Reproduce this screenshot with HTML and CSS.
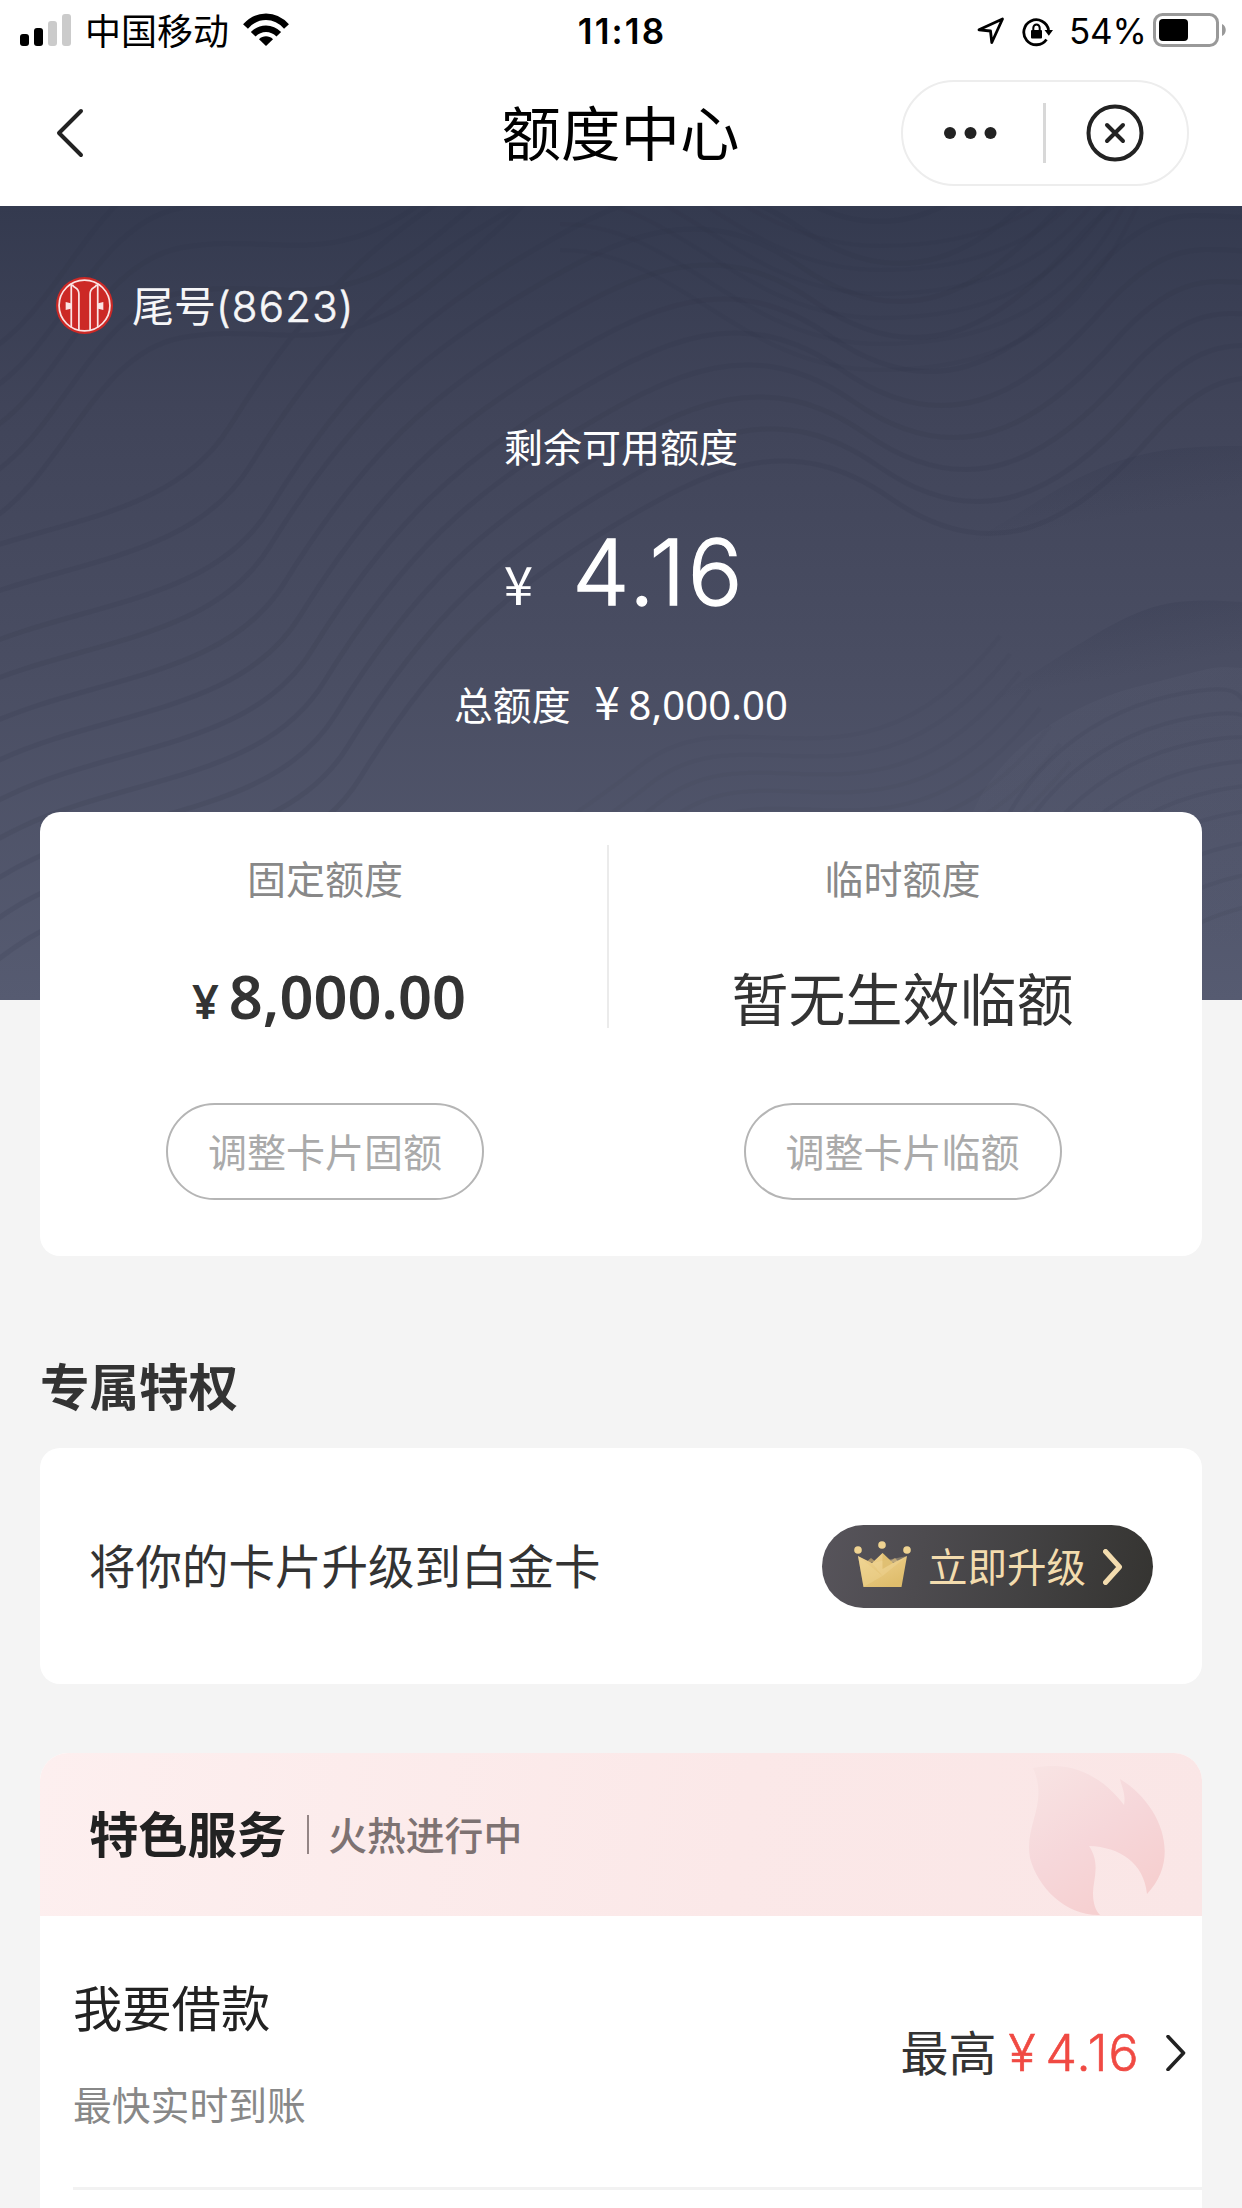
FILE: index.html
```html
<!DOCTYPE html>
<html lang="zh-CN">
<head>
<meta charset="utf-8">
<title>额度中心</title>
<link rel="stylesheet" href="styles.css">
</head>
<body>
<div class="status">
  <div class="status-left">
    <svg class="signal" viewBox="0 0 51 32"><rect y="20" width="9" height="12" rx="3"/><rect x="14" y="14" width="9" height="18" rx="3"/><g fill="#cbcbcb"><rect x="28" y="7" width="9" height="25" rx="3"/><rect x="42" width="9" height="32" rx="3"/></g></svg>
    <span class="carrier">中国移动</span>
    <svg class="wifi" viewBox="0 0 46 33"><g fill="none" stroke="#000" stroke-width="6.5"><path d="M2.5 13.5C14 .5 32 .5 43.500 13.500"/><path d="M10.200 21.300C17.500 13.800 28.500 13.800 35.800 21.300"/></g><path d="M16 26.200C20 22.400 26 22.400 30 26.200L23 33Z"/></svg>
  </div>
  <div class="clock">11:18</div>
  <div class="status-right">
    <svg class="locate" viewBox="0 0 28 28"><path d="M2 12.800 25.500 2 14.800 25.500 13.500 14Z" fill="none" stroke="#000" stroke-width="2.800" stroke-linejoin="round"/></svg>
    <svg class="rotation" viewBox="0 0 32 30"><path d="M26.600 13A12.500 12.500 0 1 0 24.500 22.500" fill="none" stroke="#000" stroke-width="2.800"/><path d="M22.500 13H31L26.800 18.800Z"/><rect x="9" y="13" width="11" height="8.500" rx="1"/><path d="M11.300 14V11A3.200 3.600 0 0 1 17.700 11V14" fill="none" stroke="#000" stroke-width="2"/></svg>
    <span class="percent">54%</span>
    <svg class="battery" viewBox="0 0 74 34"><rect x="1.500" y="1.500" width="63" height="31" rx="8" fill="none" stroke="#999" stroke-width="3"/><rect x="6" y="6" width="29" height="22" rx="4"/><path d="M69 11C74 13 74 21 69 23Z" fill="#999"/></svg>
  </div>
</div>

<header class="nav">
  <svg class="back" viewBox="0 0 28 50"><path d="M25 3 3 25 25 47" fill="none" stroke="#222" stroke-width="4" stroke-linecap="round" stroke-linejoin="round"/></svg>
  <h1 class="nav-title">额度中心</h1>
  <div class="capsule">
    <svg class="dots" viewBox="0 0 54 14"><circle cx="7" cy="7" r="6"/><circle cx="27.500" cy="7" r="6"/><circle cx="47.500" cy="7" r="6"/></svg>
    <i class="capsule-line"></i>
    <svg class="close" viewBox="0 0 58 58"><circle cx="29" cy="29" r="26.500"/><path d="M21 21 37 37M37 21 21 37"/></svg>
  </div>
</header>

<section class="hero">
  <svg class="waves" viewBox="0 0 1242 794" preserveAspectRatio="none">
    <defs>
      <linearGradient id="fold" x1="0" y1="0" x2=".35" y2="1"><stop offset="0" stop-color="#2d3248" stop-opacity=".42"/><stop offset=".5" stop-color="#2d3248" stop-opacity="0"/></linearGradient>
      <linearGradient id="mound" x1="0" y1="0" x2=".2" y2="1"><stop offset="0" stop-color="#676b80" stop-opacity=".15"/><stop offset="1" stop-color="#676b80" stop-opacity="0"/></linearGradient>
      <path id="rise" d="M-20 230C60 190 90 60 180 42S330 70 430 -10S520 -90 560 -130"/>
      <path id="slope" d="M-130 560C-20 420 190 470 270 340S420 150 520 90S700 -10 800 60S980 90 1060 0S1170 -50 1260 -60"/>
      <path id="bowl" d="M560 90C680 90 740 210 880 210S1090 150 1140 40S1200 -50 1260 -60"/>
      <path id="ring" d="M985 680C1000 580 1080 510 1170 490S1230 500 1260 505"/>
      <path id="fan" d="M350 790C430 690 540 640 640 560S860 610 1000 430"/>
    </defs>
    <g class="contour">
      <use href="#rise" y="-80"/><use href="#rise" y="-40"/><use href="#rise"/><use href="#rise" y="45"/><use href="#rise" y="90"/>
      <use href="#slope" x="-40" y="-120"/><use href="#slope" x="-20" y="-80"/><use href="#slope" y="-38"/><use href="#slope"/><use href="#slope" x="15" y="36"/><use href="#slope" x="30" y="70"/><use href="#slope" x="42" y="104"/><use href="#slope" x="54" y="136"/><use href="#slope" x="66" y="168"/><use href="#slope" x="78" y="200"/><use href="#slope" x="90" y="232"/>
    </g>
    <g class="contour fine">
      <use href="#bowl" y="-170"/><use href="#bowl" y="-146"/><use href="#bowl" y="-122"/><use href="#bowl" y="-98"/><use href="#bowl" y="-72"/><use href="#bowl" y="-46"/>
    </g>
    <g class="contour faint">
      <use href="#fan"/><use href="#fan" x="10" y="18"/><use href="#fan" x="20" y="36"/><use href="#fan" x="30" y="54"/><use href="#fan" x="40" y="72"/><use href="#fan" x="50" y="90"/><use href="#fan" x="60" y="108"/><use href="#fan" x="70" y="126"/>
    </g>
    <path fill="url(#fold)" d="M760 370C880 390 950 350 1030 300S1150 240 1242 240V480C1100 440 900 520 760 370Z"/>
    <path fill="url(#fold)" d="M800 640C920 550 980 500 1060 450S1160 390 1242 396V600C1120 560 950 660 800 640Z"/>
    <path fill="url(#mound)" d="M962 650C970 560 1060 500 1140 480S1210 460 1242 462V794H962Z"/>
    <g class="contour fine">
      <use href="#ring"/><use href="#ring" x="10" y="24"/><use href="#ring" x="20" y="48"/><use href="#ring" x="30" y="72"/><use href="#ring" x="40" y="96"/><use href="#ring" x="50" y="120"/><use href="#ring" x="60" y="150"/><use href="#ring" x="70" y="180"/><use href="#ring" x="80" y="210"/>
    </g>
  </svg>
  <div class="bank">
    <svg class="bank-logo" viewBox="0 0 56 56"><circle cx="28" cy="28" r="28" fill="#cc2926"/><g fill="none" stroke="#fbe4e4" stroke-width="1.700"><circle cx="28" cy="28" r="25"/><path d="M15 6.500V49.500M41 6.500V49.500"/><path d="M16 7.500C18 12 22.500 9.500 22.500 17V52M40 7.500C38 12 33.500 9.500 33.500 17V52"/></g><path fill="#fbe4e4" d="M9.500 24.500 15.500 26V31L9.500 32.500ZM46.500 24.500 40.500 26V31L46.500 32.500Z"/></svg>
    <span class="bank-tail">尾号<span class="bank-digits">(8623)</span></span>
  </div>
  <div class="remain-label">剩余可用额度</div>
  <div class="remain"><span class="remain-yen">¥</span><span class="remain-value">4.16</span></div>
  <div class="total"><span>总额度</span><span class="total-yen">¥</span><span class="total-value">8,000.00</span></div>
</section>

<section class="limits">
  <div class="limit">
    <div class="limit-label">固定额度</div>
    <div class="limit-value amount"><span class="amount-yen">¥</span>8,000.00</div>
    <div class="limit-button">调整卡片固额</div>
  </div>
  <i class="limit-line"></i>
  <div class="limit">
    <div class="limit-label">临时额度</div>
    <div class="limit-value">暂无生效临额</div>
    <div class="limit-button">调整卡片临额</div>
  </div>
</section>

<h2 class="section-title">专属特权</h2>
<section class="upgrade">
  <span class="upgrade-text">将你的卡片升级到白金卡</span>
  <div class="upgrade-button">
    <svg class="crown" viewBox="0 0 57 47">
      <defs><linearGradient id="gold" x2=".6" y2="1"><stop stop-color="#f1d493"/><stop offset="1" stop-color="#dfbd6c"/></linearGradient></defs>
      <path fill="#a79068" d="M11 22 17 17 22 21ZM35 21 41 17 46 22Z"/>
      <path fill="url(#gold)" d="M4 15 18 22 28.500 12 39 22 53 15 47.500 46H9.500Z"/>
      <path fill="#f2d99c" opacity=".35" d="M4 15 28.500 35 9.500 46Z"/><path fill="#f5dea5" opacity=".3" d="M53 15 28.500 35 18 22Z"/>
      <path fill="#d9b563" opacity=".6" d="M28.500 12 39 22 28.500 28Z"/>
      <g fill="#efd391"><circle cx="4" cy="9" r="3.800"/><circle cx="28" cy="4" r="3.800"/><circle cx="53" cy="9" r="3.800"/></g>
    </svg>
    <span>立即升级</span>
    <svg class="upgrade-arrow" viewBox="0 0 20 36"><path d="M2.500 2.500 16.500 18 2.500 33.500" fill="none" stroke="#f3dcae" stroke-width="5" stroke-linecap="round" stroke-linejoin="round"/></svg>
  </div>
</section>

<section class="services">
  <div class="services-head">
    <h2 class="services-title">特色服务</h2>
    <i class="services-line"></i>
    <span class="services-sub">火热进行中</span>
    <svg class="flame" viewBox="0 0 136 150"><defs><linearGradient id="fire" x1=".1" y1="0" x2=".7" y2="1"><stop stop-color="#f8e3e3"/><stop offset=".5" stop-color="#f6d7da"/><stop offset="1" stop-color="#f6cece"/></linearGradient></defs><path fill="url(#fire)" d="M4 2C47-7 77 15 95 39C97 28 93 22 91 13C132 38 153 92 118 128C115 97 91 81 60 80C72 98 64 114 64 127C64 138 67 145 71 149C37 150 9 122 1 92C-5 59 20 38 4 2Z"/></svg>
  </div>
  <div class="service">
    <div class="service-main">
      <div class="service-name">我要借款</div>
      <div class="service-note">最快实时到账</div>
    </div>
    <div class="service-side">
      <span>最高</span><span class="service-yen">¥</span><span class="service-amount">4.16</span>
      <svg class="service-arrow" viewBox="0 0 20 36"><path d="M2 1.500 17.500 18 2 34.500" fill="none" stroke="#222" stroke-width="3.600" stroke-linecap="round" stroke-linejoin="round"/></svg>
    </div>
  </div>
</section>
</body>
</html>
```
FILE: styles.css
```css
* { box-sizing: border-box; }
body {
  margin: 0;
  width: 1242px;
  height: 2208px;
  overflow: hidden;
  background: #f4f4f4;
  color: #333;
  font-family: "Noto Sans CJK SC", sans-serif;
}
svg { display: block; flex: none; }
h1, h2 { margin: 0; font-weight: 400; }

/* status bar */
.status {
  display: grid;
  grid-template-columns: 1fr auto 1fr;
  height: 62px;
  padding: 0 15px 0 20px;
  background: #fff;
  color: #000;
  font-size: 36px;
  line-height: 59px;
}
.status-left, .status-right { display: flex; }
.status-right { justify-content: flex-end; font-family: Inter, sans-serif; }
.signal { width: 51px; height: 32px; margin-top: 14px; }
.carrier { margin-left: 14px; width: 144px; }
.wifi { width: 46px; height: 33px; margin: 13px 0 0 14px; }
.clock { padding-right: 3px; font-family: Inter, sans-serif; font-weight: 600; font-size: 35px; line-height: 63px; letter-spacing: 2.100px; }
.locate { width: 28px; height: 28px; margin: 17px 17px 0 0; }
.rotation { width: 32px; height: 30px; margin: 17px 15px 0 0; }
.percent { width: 79px; font-size: 35px; line-height: 63px; letter-spacing: -.2px; white-space: nowrap; }
.battery { width: 74px; height: 34px; margin: 13px 0 0 5px; }

/* title bar */
.nav {
  display: grid;
  grid-template-columns: 1fr auto 1fr;
  align-items: center;
  height: 144px;
  padding: 0 53px 2px 56px;
  background: #fff;
}
.back { width: 28px; height: 50px; }
.nav-title { color: #000; font-size: 59.500px; line-height: 80px; padding: 0 4px 6px 0; }
.capsule {
  justify-self: end;
  display: flex;
  align-items: center;
  width: 288px;
  height: 106px;
  padding: 0 43px 0 40px;
  border: 2px solid #ededed;
  border-radius: 53px;
}
.dots { width: 54px; height: 14px; fill: #222; }
.capsule-line { width: 4px; height: 60px; margin: 0 40px 0 46px; background: #d8d8d8; }
.close { width: 58px; height: 58px; fill: none; stroke: #222; stroke-width: 4; stroke-linecap: round; }

/* dark header */
.hero {
  position: relative;
  height: 794px;
  padding-top: 64px;
  background: linear-gradient(#343a4f, #404459 25%, #4a4e63 60%, #565b71);
  color: #fff;
}
.waves { position: absolute; inset: 0; width: 100%; height: 100%; }
.contour { fill: none; stroke: #2b2f42; stroke-width: 5; opacity: .13; }
.fine { stroke-width: 4; opacity: .09; }
.faint { stroke-width: 4; opacity: .05; }
.bank, .remain-label, .remain, .total { position: relative; }
.bank { display: flex; align-items: center; height: 70px; padding-left: 56px; }
.bank-logo { width: 57px; height: 57px; }
.bank-tail { margin-left: 19px; font-size: 42px; line-height: 68px; color: #f6f6f8; }
.bank-digits { font-family: Inter, sans-serif; font-weight: 300; letter-spacing: 1.200px; -webkit-text-stroke: .6px; }
.remain-label { margin-top: 77px; font-size: 39px; line-height: 56px; height: 56px; text-align: center; }
.remain { display: flex; justify-content: center; align-items: baseline; height: 130px; margin-top: 34px; padding-left: 7px; font-family: Inter, sans-serif; line-height: 130px; }
.remain-yen { font-size: 53px; margin-right: 39px; font-family: "Noto Sans CJK SC", sans-serif; }
.remain-value { font-size: 91px; letter-spacing: 2.600px; font-weight: 300; -webkit-text-stroke: 1.300px; }
.total { display: flex; justify-content: center; align-items: baseline; margin-top: 33px; font-size: 38.800px; line-height: 60px; }
.total-yen { margin-left: 15px; width: 43px; text-align: center; font-size: 46px; }
.total-value { font-family: "Noto Sans", sans-serif; font-size: 40px; font-weight: 400; letter-spacing: .1px; }

/* limits card */
.limits {
  position: relative;
  display: grid;
  grid-template-columns: 567px 2px 587px;
  width: 1162px;
  height: 444px;
  margin: -188px 40px 0;
  padding-top: 33px;
  border-radius: 20px;
  background: #fff;
}
.limit { display: flex; flex-direction: column; align-items: center; padding-left: 3px; }
.limit + .limit-line { height: 183px; background: #ebebeb; }
.limit-line + .limit { padding: 0; }
.limit-label { height: 56px; margin-top: 4px; font-size: 39px; line-height: 56px; color: #888; }
.limit-value { height: 80px; margin-top: 51px; font-size: 57px; line-height: 80px; white-space: nowrap; }
.amount { font-family: "Noto Sans", sans-serif; font-size: 59.500px; font-weight: 600; padding-left: 8px; }
.amount-yen { font-size: 47px; margin-right: 10px; }
.limit-button { width: 318px; height: 97px; margin-top: 67px; border: 2px solid #b5b5b5; border-radius: 49px; text-align: center; font-size: 39px; line-height: 90px; color: #aaa; }

/* privileges */
.section-title { margin: 95px 40px 0; font-size: 49.500px; line-height: 68px; font-weight: 700; }
.upgrade {
  display: flex;
  align-items: center;
  justify-content: space-between;
  height: 236px;
  margin: 29px 40px 0;
  padding: 0 49px;
  border-radius: 20px;
  background: #fff;
}
.upgrade-text { font-size: 46.500px; line-height: 70px; padding-bottom: 4px; }
.upgrade-button {
  display: flex;
  align-items: center;
  width: 331px;
  height: 83px;
  padding-left: 32px;
  border-radius: 42px;
  background: linear-gradient(100deg, #57545b, #434243 60%, #353431);
  color: #f3dcae;
  font-size: 39.500px;
  line-height: 78px;
}
.crown { width: 57px; height: 47px; margin: 0 17px 4px 0; }
.upgrade-button span { padding-bottom: 3px; }
.upgrade-arrow { width: 20px; height: 36px; margin: 2px 0 0 17px; }

/* services */
.services { height: 480px; margin: 69px 40px 0; border-radius: 28px 28px 0 0; overflow: hidden; background: #fff; }
.services-head {
  display: flex;
  align-items: center;
  height: 163px;
  padding: 0 37px 0 49px;
  background: linear-gradient(100deg, #fdefef, #fbe8e8 60%, #fae6e6);
}
.services-title { font-size: 49.300px; line-height: 70px; font-weight: 700; color: #222; padding-bottom: 5px; }
.services-line { width: 2px; height: 39px; margin: 0 19px 0 21px; background: #948585; }
.services-sub { font-size: 38.800px; line-height: 60px; font-weight: 500; color: #7d7272; padding-bottom: 4px; }
.flame { width: 136px; height: 150px; margin: 12px 0 0 auto; }
.service {
  display: flex;
  justify-content: space-between;
  height: 274px;
  margin-left: 33px;
  border-bottom: 3px solid #f2f2f2;
}
.service-name { margin-top: 54px; font-size: 49.300px; line-height: 72px; color: #222; }
.service-note { margin-top: 31px; font-size: 38.800px; line-height: 60px; color: #888; }
.service-side { display: flex; align-items: baseline; height: 70px; margin: 99px 16px 0 0; font-size: 48px; line-height: 70px; }
.service-yen, .service-amount { color: #f04a43; font-family: Inter, sans-serif; font-size: 50px; font-weight: 300; -webkit-text-stroke: .6px; }
.service-yen { width: 30px; margin: 0 7px 0 12px; }
.service-amount { letter-spacing: 1.300px; }
.service-arrow { align-self: center; width: 20px; height: 36px; margin: 5px 0 0 26px; }
```
